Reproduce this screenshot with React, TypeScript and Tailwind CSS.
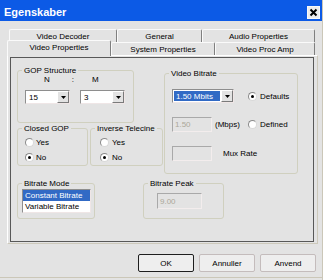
import React from "react";

const Tri = () => (
  <svg width="5" height="3" viewBox="0 0 5 3">
    <path d="M0 0H5L2.5 3Z" fill="#000" />
  </svg>
);

function Combo({ className, value, selected }: { className: string; value: string; selected?: boolean }) {
  return (
    <div
      className={`flex h-[14px] border border-t-[#8e8e8e] border-l-[#8e8e8e] border-b-[#efe6e6] border-r-[#efe6e6] bg-white ${className}`}
    >
      <div className="flex-1 p-[1px] flex">
        <div className={`flex-1 flex items-center pl-[2px] ${selected ? "bg-[#316ac5] text-white" : ""}`}>{value}</div>
      </div>
      <div className="w-[12px] h-full bg-[#e3e3e3] border border-t-white border-l-white border-b-[#7a7a7a] border-r-[#7a7a7a] flex items-center justify-center">
        <Tri />
      </div>
    </div>
  );
}

function Radio({ checked }: { checked?: boolean }) {
  return (
    <span className="w-[9px] h-[9px] rounded-full bg-white border border-t-[#8a8a8a] border-l-[#8a8a8a] border-b-[#d8d8d8] border-r-[#d8d8d8] flex items-center justify-center shrink-0">
      {checked && <span className="w-[3px] h-[3px] rounded-full bg-black" />}
    </span>
  );
}

function TextBox({ className, value }: { className: string; value?: string }) {
  return (
    <div
      className={`flex items-center pl-[2px] bg-[#e3e3e3] text-[#aca899] border border-t-[#a9a9a9] border-l-[#a9a9a9] border-b-[#f3eded] border-r-[#f3eded] ${className}`}
    >
      {value}
    </div>
  );
}

function Group({ title, className, children }: { title: string; className: string; children?: React.ReactNode }) {
  return (
    <fieldset className={`border border-[#d0d0bf] rounded-[3px] ${className}`}>
      <legend className="ml-[4px] px-[2px] leading-[9px]">{title}</legend>
      {children}
    </fieldset>
  );
}

function Tab({ className, children }: { className: string; children: React.ReactNode }) {
  return (
    <div
      className={`flex items-center justify-center h-full bg-[#e3e3e3] border-t border-l border-r border-t-[#fafafa] border-l-[#fafafa] border-r-[#7f7f7f] rounded-t-[2px] ${className}`}
    >
      {children}
    </div>
  );
}

function Btn({ children, def }: { children: React.ReactNode; def?: boolean }) {
  return (
    <div
      className={`w-[56px] h-[18px] flex items-center justify-center rounded-[2px] bg-[#eeeeee] border ${
        def ? "border-[#1e1e1e]" : "border-[#c4bcbc]"
      }`}
    >
      {children}
    </div>
  );
}

export default function App() {
  return (
    <div className="w-[323px] h-[280px] bg-[#e3e3e3] flex flex-col font-['Liberation_Sans',Arial,sans-serif] text-[8px] leading-[9px] text-black overflow-hidden border-r border-[#cbc7b8]">
      {/* title bar */}
      <div className="h-[21px] shrink-0 bg-[#0c5ae6] flex items-end justify-between pl-[4px] pr-[2px] pb-[2px]">
        <span className="text-[11px] leading-[13px] font-bold text-white">Egenskaber</span>
        <div className="w-[13px] h-[13px] bg-[#ececec] border border-[#f8f8f8] flex items-center justify-center">
          <svg width="9" height="9" viewBox="0 0 9 9">
            <path d="M1.5 1.5L7.5 7.5M7.5 1.5L1.5 7.5" stroke="#000" strokeWidth="2" />
          </svg>
        </div>
      </div>

      {/* tabs */}
      <div className="flex h-[13px] ml-[9px] mt-[8px]">
        <Tab className="w-[108px]">Video Decoder</Tab>
        <Tab className="w-[85px]">General</Tab>
        <Tab className="w-[113px]">Audio Properties</Tab>
      </div>
      <div className="flex h-[13px] items-start">
        <div className="relative z-10 ml-[7px] -mt-[2px] h-[16px] w-[104px] bg-[#e3e3e3] border-t border-l border-r border-t-[#fafafa] border-l-[#fafafa] border-r-[#7f7f7f] rounded-t-[2px] flex items-center justify-center pb-[2px]">
          Video Properties
        </div>
        <Tab className="w-[104px]">System Properties</Tab>
        <Tab className="w-[100px]">Video Proc Amp</Tab>
      </div>

      {/* panel */}
      <div className="ml-[7px] w-[311px] h-[189px] shrink-0 flex border border-t-white border-l-white border-b-[#cdc9bb] border-r-[#cdc9bb] pt-[1px] pl-[2px] pr-[3px] pb-[1px]">
        <div className="flex-1 border border-[#585858] flex flex-col pl-[6px]">
          <div className="flex items-start">
            <div className="flex flex-col w-[146px]">
              <Group title="GOP Structure" className="mt-[8px] h-[57px] w-[117px]">
                <div className="flex pl-[7px] h-[9px]">
                  <span className="ml-[19px]">N</span>
                  <span className="ml-[22px]">:</span>
                  <span className="ml-[18px]">M</span>
                </div>
                <div className="flex pl-[7px] mt-[6px] gap-[10px]">
                  <Combo className="w-[45px]" value="15" />
                  <Combo className="w-[45px]" value="3" />
                </div>
              </Group>
              <div className="flex gap-[2px] mt-[1px]">
                <Group title="Closed GOP" className="w-[71px] h-[42px]">
                  <div className="pl-[7px]">
                    <div className="flex items-center h-[10px] gap-[2px] mt-[4px]">
                      <Radio />
                      <span>Yes</span>
                    </div>
                    <div className="flex items-center h-[10px] gap-[2px] mt-[5px]">
                      <Radio checked />
                      <span>No</span>
                    </div>
                  </div>
                </Group>
                <Group title="Inverse Telecine" className="w-[73px] h-[42px]">
                  <div className="pl-[9px]">
                    <div className="flex items-center h-[10px] gap-[3px] mt-[4px]">
                      <Radio />
                      <span>Yes</span>
                    </div>
                    <div className="flex items-center h-[10px] gap-[3px] mt-[5px]">
                      <Radio checked />
                      <span>No</span>
                    </div>
                  </div>
                </Group>
              </div>
            </div>

            <Group title="Video Bitrate" className="ml-[1px] mt-[11px] h-[105px] w-[134px]">
              <div className="pl-[7px]">
                <div className="flex items-center mt-[11px] h-[14px]">
                  <div className="w-[76px]">
                    <Combo className="w-[62px]" value="1.50 Mbits" selected />
                  </div>
                  <Radio checked />
                  <span className="ml-[3px]">Defaults</span>
                </div>
                <div className="flex items-center mt-[14px] h-[15px]">
                  <div className="w-[76px] flex items-center">
                    <TextBox className="w-[40px] h-[15px]" value="1.50" />
                    <span className="ml-[3px]">(Mbps)</span>
                  </div>
                  <Radio />
                  <span className="ml-[3px]">Defined</span>
                </div>
                <div className="flex items-center mt-[14px] h-[15px]">
                  <TextBox className="w-[40px] h-[15px]" />
                  <span className="ml-[11px]">Mux Rate</span>
                </div>
              </div>
            </Group>
          </div>

          <div className="flex mt-[5px]">
            <Group title="Bitrate Mode" className="w-[78px] h-[40px]">
              <div className="ml-[4px] mt-[1px] w-[69px] h-[24px] bg-white border border-t-[#8e8e8e] border-l-[#8e8e8e] border-b-[#efe6e6] border-r-[#efe6e6]">
                <div className="h-[11px] flex items-center pl-[2px] bg-[#316ac5] text-white">Constant Bitrate</div>
                <div className="h-[11px] flex items-center pl-[2px]">Variable Bitrate</div>
              </div>
            </Group>
            <Group title="Bitrate Peak" className="ml-[48px] w-[81px] h-[40px]">
              <TextBox className="ml-[13px] mt-[5px] w-[45px] h-[16px]" value="9.00" />
            </Group>
          </div>
        </div>
      </div>

      {/* buttons */}
      <div className="flex justify-end gap-[5px] pr-[6px] mt-[10px]">
        <Btn def>OK</Btn>
        <Btn>Annuller</Btn>
        <Btn>Anvend</Btn>
      </div>
      <div className="mt-[5px] border-t border-[#cbc7b8]" />
    </div>
  );
}
